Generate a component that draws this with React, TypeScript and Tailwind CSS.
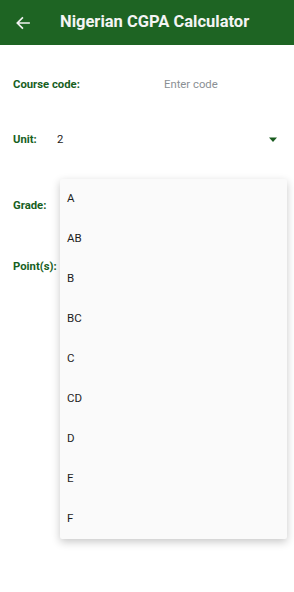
import React from "react";

const grades = ["A", "AB", "B", "BC", "C", "CD", "D", "E", "F"];

export default function App() {
  return (
    <div className="relative w-[294px] h-[592px] bg-white overflow-hidden" style={{ fontFamily: "Roboto, 'Noto Sans', sans-serif" }}>
      <div className="h-[45px] bg-[#1e6423] flex items-center">
        <div className="w-[46px] flex items-center pl-[15px]">
          <svg width="16" height="16" viewBox="0 0 24 24" fill="none" stroke="#f1f1f1" strokeWidth="2.6" strokeLinecap="square">
            <path d="M21 12H4M11 4.5L3.5 12L11 19.5" />
          </svg>
        </div>
        <div className="pl-[14px] text-[#f4f4f4] text-[16.5px] font-bold">Nigerian CGPA Calculator</div>
      </div>
      <div className="pl-[13px] pr-[16px]">
        <div className="h-[78px] flex items-center pt-[2px]">
          <div className="w-[151px] text-[11.3px] font-bold text-[#17601e]">Course code:</div>
          <div className="text-[11.3px] text-[#8a8f94]">Enter code</div>
        </div>
        <div className="h-[34px] flex items-center">
          <div className="w-[44px] text-[11.3px] font-bold text-[#17601e]">Unit:</div>
          <div className="flex-1 text-[11.3px] text-[#222]">2</div>
          <svg width="10" height="6" viewBox="0 0 10 6">
            <path d="M1 0.5H9L5 5Z" fill="#1a5c20" />
          </svg>
        </div>
        <div className="h-[33px]" />
        <div className="h-[32px] flex items-center">
          <div className="text-[11.3px] font-bold text-[#17601e]">Grade:</div>
        </div>
        <div className="h-[30px]" />
        <div className="h-[30px] flex items-center">
          <div className="text-[11.3px] font-bold text-[#17601e]">Point(s):</div>
        </div>
      </div>
      <div className="absolute left-[60px] top-[179px] w-[227px] bg-[#fafafa] shadow-[0_3px_8px_rgba(0,0,0,0.22)] rounded-[2px]">
        {grades.map((g) => (
          <div key={g} className="h-[40px] flex items-center pl-[7px] text-[11.5px] text-[#1e1e1e]">
            {g}
          </div>
        ))}
      </div>
    </div>
  );
}
